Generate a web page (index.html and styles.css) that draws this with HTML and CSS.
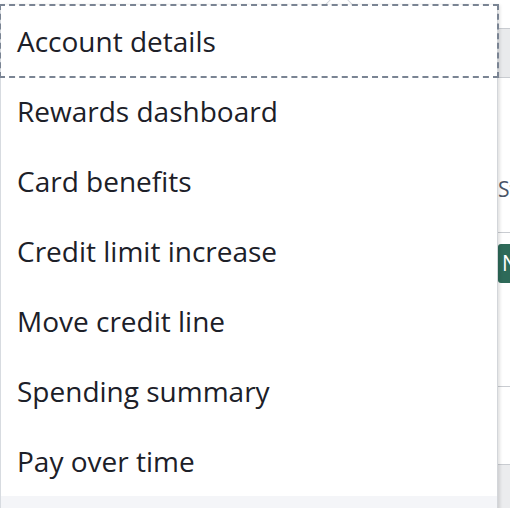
FILE: index.html
```html
<!DOCTYPE html>
<html lang="en">
<head>
<meta charset="utf-8">
<title>Account menu</title>
<link rel="stylesheet" href="styles.css">
</head>
<body>
<div class="page">
  <div class="table">
    <div class="row head"><div class="spacer"></div><div class="cell"></div></div>
    <div class="row r1"><div class="spacer"></div><div class="cell text">Status</div></div>
    <div class="row r2"><div class="spacer"></div><div class="cell"><span class="badge">New</span></div></div>
    <div class="row r3"><div class="spacer"></div><div class="cell"></div></div>
    <div class="row foot"><div class="spacer"></div><div class="cell"></div></div>
  </div>

  <div class="popover">
    <div class="arrow"></div>
    <ul class="menu">
      <li class="item focused">Account details</li>
      <li class="item">Rewards dashboard</li>
      <li class="item">Card benefits</li>
      <li class="item">Credit limit increase</li>
      <li class="item">Move credit line</li>
      <li class="item">Spending summary</li>
      <li class="item">Pay over time</li>
      <li class="item hovered">Manage autopay</li>
    </ul>
  </div>
</div>
</body>
</html>
```

FILE: styles.css
```css
html, body {
  margin: 0;
  padding: 0;
  background: #ffffff;
}

body {
  width: 510px;
  height: 508px;
  overflow: hidden;
  font-family: "Open Sans", "Noto Sans", sans-serif;
}

.page {
  position: relative;
  width: 510px;
  height: 508px;
  overflow: hidden;
}

/* underlying table */
.table {
  padding-top: 28px;
  display: flex;
  flex-direction: column;
}

.row {
  display: grid;
  grid-template-columns: 498px 1fr;
  box-sizing: border-box;
  border-bottom: 1px solid #c9ccd1;
}

.head {
  border-top: 1px solid #c9ccd1;
  height: 50px;
  background: #e9eaec;
}

.r1 {
  height: 155px;
  padding-top: 97px;
}

.r2 {
  height: 154px;
  padding-top: 11px;
}

.r3 {
  height: 78px;
}

.foot {
  height: 60px;
  background: #ebecee;
  border-bottom: none;
}

.text {
  font-size: 21px;
  color: #4a5568;
  white-space: nowrap;
}

.badge {
  display: inline-block;
  background: #2e6a59;
  color: #ffffff;
  font-size: 21px;
  line-height: 39px;
  height: 39px;
  padding: 0 4px;
  border-radius: 3px;
}

/* popover menu */
.popover {
  position: absolute;
  left: 0;
  top: 5px;
  width: 498px;
  z-index: 2;
}

.arrow {
  position: absolute;
  left: 328px;
  top: -10px;
  width: 20px;
  height: 20px;
  background: #ffffff;
  border: 1px solid #d3d7dc;
  transform: rotate(45deg);
}

.menu {
  position: relative;
  list-style: none;
  margin: 0;
  padding: 1px 0 0 0;
  background: #ffffff;
  border-left: 1px solid #d7dbe0;
  border-right: 1px solid #d3d6da;
  box-shadow: 2px 0 3px rgba(0, 0, 0, 0.12);
}

.item {
  height: 70px;
  line-height: 70px;
  padding-left: 16px;
  font-size: 28px;
  color: #1c2028;
  white-space: nowrap;
}

.focused {
  outline: 2px dashed #7a8493;
  outline-offset: -0.5px;
}

.hovered {
  background: #f4f5f8;
}
```
